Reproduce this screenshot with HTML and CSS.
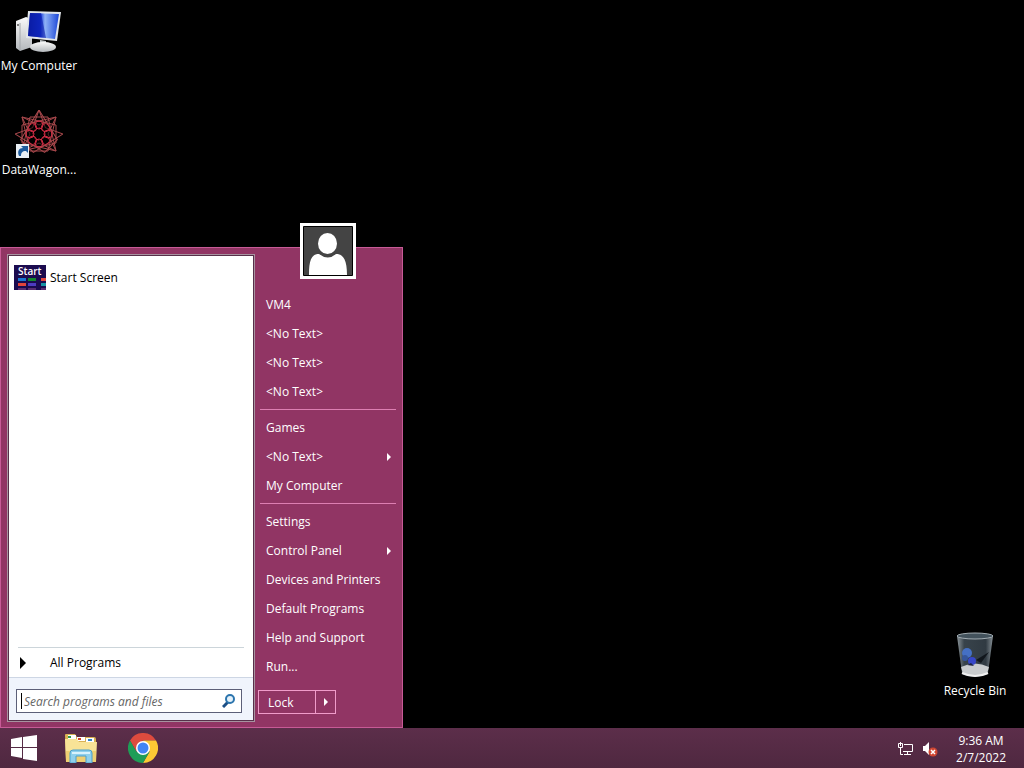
FILE: index.html
```html
<!DOCTYPE html>
<html lang="en">
<head>
    <meta charset="utf-8">
    <meta name="viewport" content="width=device-width, initial-scale=1">
    <title>Desktop</title>
    <link rel="stylesheet" href="styles.css">
</head>
<body>
<main class="desktop">
    <a class="shortcut computer" href="#">
        <svg width="48" height="44" viewBox="0 0 48 44">
            <defs>
                <linearGradient id="screen" x1="0" y1="0" x2="1" y2="0">
                    <stop offset="0" stop-color="#0a1c9c"/>
                    <stop offset=".4" stop-color="#1538d8"/>
                    <stop offset=".55" stop-color="#8fb2f6"/>
                    <stop offset="1" stop-color="#1b46d8"/>
                </linearGradient>
                <linearGradient id="metal" x1="0" y1="0" x2="0" y2="1">
                    <stop offset="0" stop-color="#fafafa"/>
                    <stop offset="1" stop-color="#b4b8bc"/>
                </linearGradient>
            </defs>
            <path d="M1 11l10-4 6 2v28l-12 4-4-3z" fill="url(#metal)"/>
            <path d="M5 13v27" stroke="#a4a8ac"/>
            <circle cx="3" cy="15" r="1" fill="#555"/>
            <path d="M25 30l6 1v6h-6z" fill="#c4c8ca"/>
            <ellipse cx="28" cy="37" rx="13" ry="5" fill="url(#metal)"/>
            <path d="M13 1l33 1-4 29-31-3z" fill="#e2e6ea"/>
            <path d="M15 3l29 1-4 25-27-3z" fill="url(#screen)"/>
            <path d="M15 3l11 0 5 25-18-2z" fill="#0a1aa8" opacity=".6"/>
        </svg>
        <span>My Computer</span>
    </a>
    <a class="shortcut datawagon" href="#">
        <svg width="48" height="48" viewBox="0 0 48 48">
            <g fill="none" stroke="#a8484c">
                <path id="star" d="M7 7l34 8v18L7 41l8-17z"/>
                <use href="#star" transform="rotate(45 24 24)"/>
                <use href="#star" transform="rotate(90 24 24)"/>
                <use href="#star" transform="rotate(135 24 24)"/>
                <use href="#star" transform="rotate(180 24 24)"/>
                <use href="#star" transform="rotate(270 24 24)"/>
            </g>
            <circle cx="24" cy="24" r="11" fill="#000" opacity=".5"/>
            <g fill="none" stroke="#d02c44">
                <circle id="petal" cx="24" cy="15" r="4"/>
                <use href="#petal" transform="rotate(45 24 24)"/>
                <use href="#petal" transform="rotate(90 24 24)"/>
                <use href="#petal" transform="rotate(135 24 24)"/>
                <use href="#petal" transform="rotate(180 24 24)"/>
                <use href="#petal" transform="rotate(225 24 24)"/>
                <use href="#petal" transform="rotate(270 24 24)"/>
                <use href="#petal" transform="rotate(315 24 24)"/>
                <circle cx="24" cy="24" r="6" stroke-dasharray="2 1"/>
            </g>
            <path d="M1 34h13v14H1z" fill="#e8eef4"/>
            <path d="M4 46c-2-5 0-8 4-8l-2-2h7v7l-2-2c-4 0-5 2-5 5z" fill="#1d5a9c"/>
        </svg>
        <span>DataWagon...</span>
    </a>
    <a class="shortcut bin" href="#">
        <svg width="48" height="48" viewBox="0 0 48 48">
            <defs>
                <linearGradient id="glass" x1="0" y1="0" x2="1" y2="0">
                    <stop offset="0" stop-color="#8b9499"/>
                    <stop offset=".2" stop-color="#38434b"/>
                    <stop offset=".8" stop-color="#303a42"/>
                    <stop offset="1" stop-color="#879096"/>
                </linearGradient>
            </defs>
            <path d="M6 5l5 37c1 5 25 5 26 0l5-37z" fill="url(#glass)"/>
            <ellipse cx="24" cy="5" rx="18" ry="3" fill="#43525c" stroke="#a3adb3"/>
            <path d="M10 36q14-7 28 0l-2 7q-12 5-24 0z" fill="#c9ccce"/>
            <circle cx="16" cy="22" r="5" fill="#4570c4"/>
            <circle cx="14" cy="27" r="3" fill="#35569c"/>
            <circle cx="21" cy="30" r="4" fill="#3747c8"/>
            <path d="M25 29l13-8-8 11z" fill="#11171d"/>
            <path d="M16 34l4-2 3 3z" fill="#1c2440"/>
            <path d="M11 42q13 6 26 0" fill="none" stroke="#f0f0f0" stroke-width="2"/>
        </svg>
        <span>Recycle Bin</span>
    </a>

    <section class="start-menu">
        <div class="programs">
            <ul class="program-list">
                <li>
                    <a href="#">
                        <span class="tile">
                            <b>Start</b>
                            <svg width="32" height="12" viewBox="0 0 32 12">
                                <path d="M4 0h8v3H4z" fill="#1976d2"/>
                                <path d="M14 0h8v3h-8z" fill="#11882c"/>
                                <path d="M27 0h5v3h-5zM4 5h8v3H4z" fill="#e2453c"/>
                                <path d="M14 5h8v3h-8z" fill="#4d3cc0"/>
                                <path d="M27 5h5v3h-5z" fill="#1794a4"/>
                                <path d="M4 10h8v2H4zM14 10h8v2h-8zM27 10h5v2h-5z" fill="#5b2d70"/>
                            </svg>
                        </span>
                        Start Screen
                    </a>
                </li>
            </ul>
            <a class="all-programs" href="#">
                <svg width="6" height="12" viewBox="0 0 6 12"><path d="M0 0l6 6-6 6z"/></svg>
                All Programs
            </a>
            <form class="search">
                <label class="search-box">
                    <i class="caret"></i>
                    <input type="text" placeholder="Search programs and files" aria-label="Search programs and files">
                    <svg width="14" height="14" viewBox="0 0 14 14" fill="none">
                        <path d="M6 8l-5 5" stroke="#1c4f86" stroke-width="3"/>
                        <circle cx="8" cy="5" r="4" stroke="#2b74ad" stroke-width="2" fill="#e4f1fa"/>
                    </svg>
                </label>
            </form>
        </div>
        <nav class="places">
            <svg class="avatar" width="56" height="56" viewBox="0 0 56 56">
                <path d="M0 0h56v56H0z" fill="#fff"/>
                <path d="M3.500 3.500h49v49h-49z" fill="#444" stroke="#000"/>
                <ellipse cx="27.500" cy="20.500" rx="9.500" ry="10.500" fill="#fff"/>
                <path d="M9 52c0-14 2-21 10-21q9 7 17 0c8 0 11 7 11 21z" fill="#fff"/>
            </svg>
            <ul>
                <li><a href="#">VM4</a></li>
                <li><a href="#">&lt;No Text&gt;</a></li>
                <li><a href="#">&lt;No Text&gt;</a></li>
                <li><a href="#">&lt;No Text&gt;</a></li>
            </ul>
            <ul>
                <li><a href="#">Games</a></li>
                <li><a class="more" href="#">&lt;No Text&gt;</a></li>
                <li><a href="#">My Computer</a></li>
            </ul>
            <ul>
                <li><a href="#">Settings</a></li>
                <li><a class="more" href="#">Control Panel</a></li>
                <li><a href="#">Devices and Printers</a></li>
                <li><a href="#">Default Programs</a></li>
                <li><a href="#">Help and Support</a></li>
                <li><a href="#">Run...</a></li>
            </ul>
            <div class="power">
                <button type="button">Lock</button>
                <button type="button" class="more" aria-label="More options"></button>
            </div>
        </nav>
    </section>
</main>

<footer class="taskbar">
    <button type="button" class="task" aria-label="Start">
        <svg width="26" height="26" viewBox="0 0 26 26" fill="#fff">
            <path d="M0 4l11-2v10H0zM12 2l14-2v12H12zM0 13h11v10L0 21zM12 13h14v13l-14-2z"/>
        </svg>
    </button>
    <button type="button" class="task" aria-label="File Explorer">
        <svg width="34" height="30" viewBox="0 0 34 30">
            <path d="M1 2q0-1 1-1h9l2 3h17q2 0 2 2v22H2z" fill="#d9b254"/>
            <path d="M4 2h8v4H4zM13 4h8v4h-8zM22 5h8v4h-8z" fill="#fff"/>
            <path d="M4 3h3v2H4z" fill="#2f9a4c"/>
            <path d="M14 5h3v2h-3z" fill="#d1452c"/>
            <path d="M24 6h4v2h-4z" fill="#3286c8"/>
            <path d="M1 6h12l2 3h18l-1 20H2z" fill="#f8e397"/>
            <path d="M2 18h30v11H2z" fill="#efcf72"/>
            <path d="M6 30V20q0-3 3-3h16q3 0 3 3v10h-6v-7H12v7z" fill="#8fd0ec" stroke="#4b9fcb"/>
            <path d="M8 20h18" stroke="#d8f2fc" stroke-width="2"/>
        </svg>
    </button>
    <button type="button" class="task" aria-label="Google Chrome">
        <svg width="30" height="30" viewBox="0 0 30 30">
            <path d="M2 7.500A15 15 0 0 1 28 7.500H15L8.500 18.750z" fill="#dd4b3e"/>
            <path d="M28 7.500A15 15 0 0 1 15 30L21.500 18.750 15 7.500z" fill="#fcc934"/>
            <path d="M15 30A15 15 0 0 1 2 7.500L8.500 18.750H21.500z" fill="#1f9d57"/>
            <circle cx="15" cy="15" r="7" fill="#fff"/>
            <circle cx="15" cy="15" r="5.500" fill="#4285f4"/>
        </svg>
    </button>
    <div class="tray">
        <svg width="16" height="14" viewBox="0 0 16 14" fill="none" stroke="#fff">
            <path d="M6 2.500h8.500v7H5M9.500 10v3M6 12.500h7M2.500 6v6.500H5M.5 1.500h4v4h-4zM2.500 0v4"/>
        </svg>
        <svg width="16" height="16" viewBox="0 0 16 16">
            <path d="M1 5h2l4-4v13l-4-4H1z" fill="#fff"/>
            <circle cx="11" cy="11" r="4.500" fill="#cf4632"/>
            <path d="M9 9l4 4M13 9l-4 4" stroke="#fff" stroke-width="1.500"/>
        </svg>
        <time class="clock" datetime="2022-02-07T09:36">9:36 AM<br>2/7/2022</time>
    </div>
</footer>
</body>
</html>
```

FILE: styles.css
```css
* {
    box-sizing: border-box;
}

body {
    display: flex;
    flex-direction: column;
    min-height: 100vh;
    margin: 0;
    background: #000;
    color: #fff;
    font: 12px/17px "Open Sans", "Noto Sans", sans-serif;
}

a {
    color: inherit;
    text-decoration: none;
}

ul {
    margin: 0;
    padding: 0;
    list-style: none;
}

svg {
    display: block;
    flex: none;
}

button {
    padding: 0;
    border: 0;
    background: none;
    color: inherit;
    font: inherit;
}

/* desktop */
.desktop {
    position: relative;
    flex: 1;
}

.shortcut {
    position: absolute;
    display: flex;
    flex-direction: column;
    align-items: center;
    gap: 3px;
    width: 78px;
    white-space: nowrap;
}

.computer {
    left: 0;
    top: 10px;
}

.datawagon {
    left: 0;
    top: 110px;
}

.bin {
    right: 10px;
    bottom: 29px;
}

/* start menu */
.start-menu {
    position: absolute;
    left: 0;
    bottom: 0;
    display: flex;
    gap: 3px;
    width: 403px;
    padding: 6px 5px 5px 6px;
    border: 1px solid #c75a96;
    background: #913564;
}

.programs {
    display: flex;
    flex-direction: column;
    width: 248px;
    border: 1px solid #a7939f;
    background: #fff;
    box-shadow: inset 0 0 0 1px #57304a;
    color: #000;
}

.program-list {
    flex: 1;
    padding: 10px 6px;
}

.program-list a {
    display: flex;
    align-items: center;
    gap: 4px;
}

.tile {
    width: 32px;
    height: 25px;
    background: #1b0b4f;
    color: #fff;
    font-size: 10px;
    line-height: 13px;
}

.tile b {
    display: block;
    padding-left: 4px;
    font-weight: 600;
}

.all-programs {
    display: flex;
    align-items: center;
    gap: 24px;
    height: 30px;
    margin: 0 10px;
    padding-left: 2px;
    border-top: 1px solid #ccd5da;
}

.search {
    margin: 0 1px 1px;
    padding: 11px 11px 7px 7px;
    border-top: 1px solid #cdd6e4;
    background: #f0f4fc;
}

.search-box {
    display: flex;
    align-items: center;
    height: 24px;
    padding: 0 5px 0 4px;
    border: 1px solid #5c5f78;
    background: #fff;
}

.caret {
    width: 1px;
    height: 16px;
    margin-right: 2px;
    background: #000;
}

.search-box input {
    flex: 1;
    min-width: 0;
    padding: 0;
    border: 0;
    outline: 0;
    background: none;
    font: inherit;
}

.search-box input::placeholder {
    color: #666;
    font-style: italic;
}

.places {
    position: relative;
    flex: 1;
    padding: 36px 0 8px;
}

.avatar {
    position: absolute;
    left: 42px;
    top: -31px;
}

.places ul {
    margin: 0 1px 0 2px;
}

.places ul + ul {
    margin-top: 3px;
    padding-top: 3px;
    border-top: 1px solid #dd7fb2;
}

.places li a {
    display: flex;
    align-items: center;
    justify-content: space-between;
    height: 29px;
    padding: 0 5px 0 6px;
}

.more::after {
    content: "";
    border: 4px solid transparent;
    border-left-color: #fff;
    border-right: 0;
}

.power {
    display: flex;
    width: 78px;
    height: 24px;
    margin-top: 9px;
    border: 1px solid #f09cca;
}

.power button {
    flex: 1;
    padding-left: 9px;
    text-align: left;
}

.power .more {
    display: flex;
    flex: none;
    align-items: center;
    justify-content: center;
    width: 20px;
    padding: 0;
    border-left: 1px solid #f09cca;
}

/* taskbar */
.taskbar {
    display: flex;
    align-items: center;
    height: 40px;
    padding: 2px 18px 0 0;
    background: linear-gradient(#5c2e4a, #4f2840);
}

.task {
    display: flex;
    align-items: center;
    justify-content: center;
    width: 62px;
    height: 38px;
    padding-bottom: 2px;
}

.task:first-child {
    width: 48px;
    margin-right: 2px;
}

.tray {
    display: flex;
    align-items: center;
    gap: 8px;
    margin-left: auto;
}

.clock {
    margin-left: 10px;
    text-align: center;
}
```
